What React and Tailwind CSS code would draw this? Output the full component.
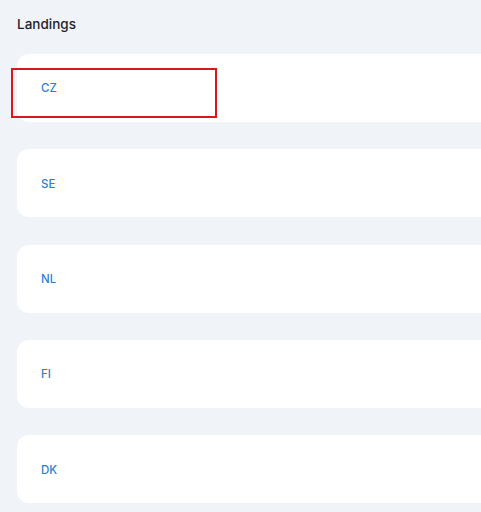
export default function App() {
  const items = ["CZ", "SE", "NL", "FI", "DK"];
  return (
    <div
      className="min-h-[512px] w-full overflow-hidden bg-[#f0f4f9] pl-[17px] pt-[14px]"
      style={{ fontFamily: "Inter, 'Noto Sans', sans-serif" }}
    >
      <h2 className="text-[13.5px] font-medium leading-[20px] text-[#1f2328]">Landings</h2>
      <div className="mt-[20px] flex flex-col gap-[27.3px] -mr-[30px]">
        {items.map((it, i) => (
          <div
            key={it}
            className="relative flex h-[68px] items-center rounded-[12px] bg-white pl-[24px] pt-[2px]"
          >
            <span className="text-[11.5px] font-medium text-[#2d7fd1]">{it}</span>
            {i === 0 && (
              <div className="absolute left-[-6px] top-[14px] h-[50px] w-[206px] border-2 border-[#e0141b]" />
            )}
          </div>
        ))}
      </div>
    </div>
  );
}
